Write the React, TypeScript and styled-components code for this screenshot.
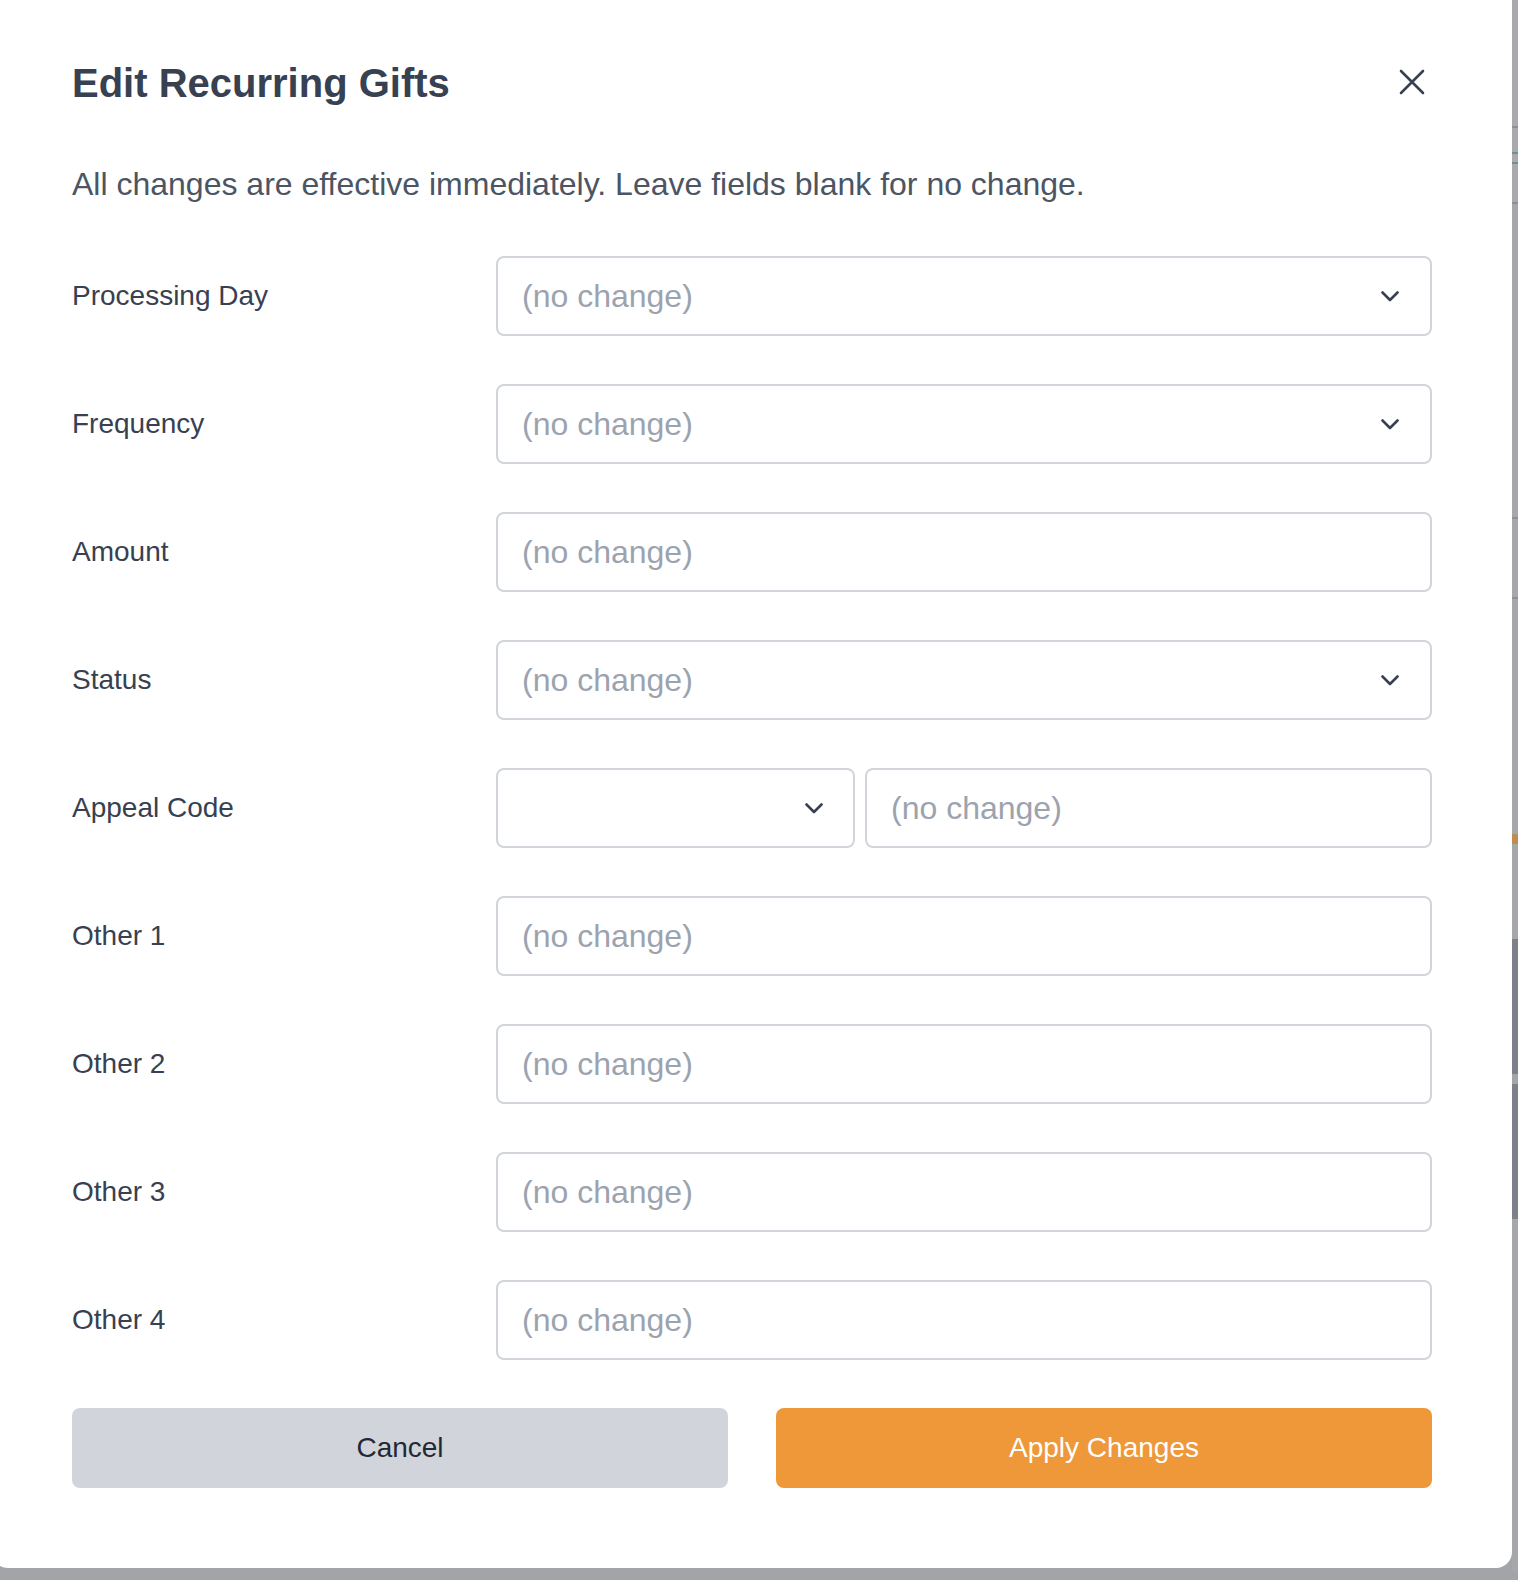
import React from 'react'
import styled, { createGlobalStyle } from 'styled-components'

const colors = {
  backdrop: '#a3a4a8',
  white: '#ffffff',
  heading: '#374151',
  text: '#4b5563',
  label: '#374151',
  border: '#d1d5db',
  placeholder: '#9ca3af',
  cancel: '#d1d5db',
  cancelText: '#1f2937',
  accent: '#ee9839',
}

const GlobalStyle = createGlobalStyle`
  html, body {
    margin: 0;
    padding: 0;
    background: ${colors.backdrop};
    overflow: hidden;
  }
  * {
    box-sizing: border-box;
  }
`

const Screen = styled.div`
  display: flex;
  align-items: flex-start;
  width: 1518px;
  height: 1580px;
  font-family: 'Liberation Sans', Arial, sans-serif;
`

const Modal = styled.div`
  flex: 0 0 1520px;
  margin-left: -8px;
  background: ${colors.white};
  border-radius: 0 0 16px 16px;
  padding: 59px 80px 80px;
`

const Header = styled.div`
  display: flex;
  align-items: center;
  justify-content: space-between;
`

const Title = styled.h2`
  margin: 0;
  font-size: 40px;
  line-height: 48px;
  font-weight: 700;
  color: ${colors.heading};
`

const CloseButton = styled.button`
  display: flex;
  align-items: center;
  justify-content: center;
  width: 40px;
  height: 40px;
  margin: -3px 0 0 0;
  padding: 0;
  border: none;
  background: none;
  color: ${colors.heading};
  cursor: pointer;
`

const Description = styled.p`
  margin: 53px 0 0;
  font-size: 32px;
  line-height: 48px;
  color: ${colors.text};
`

const Form = styled.div`
  display: grid;
  grid-template-columns: 424px 1fr;
  row-gap: 48px;
  align-items: center;
  margin-top: 48px;
`

const Label = styled.label`
  font-size: 28px;
  line-height: 36px;
  color: ${colors.label};
`

const fieldBase = `
  height: 80px;
  width: 100%;
  border: 2px solid ${colors.border};
  border-radius: 8px;
  background: ${colors.white};
  font-family: 'Liberation Sans', Arial, sans-serif;
  font-size: 32px;
`

const TextInput = styled.input`
  ${fieldBase}
  padding: 0 24px;
  color: ${colors.heading};
  outline: none;
  &::placeholder {
    color: ${colors.placeholder};
  }
`

const SelectBox = styled.div<{ $chevronRight: number }>`
  ${fieldBase}
  display: flex;
  align-items: center;
  justify-content: space-between;
  padding: 0 ${(p) => p.$chevronRight}px 0 24px;
  color: ${colors.placeholder};
  cursor: pointer;
`

const Split = styled.div`
  display: grid;
  grid-template-columns: 359px 1fr;
  column-gap: 10px;
`

const Actions = styled.div`
  display: grid;
  grid-template-columns: 1fr 1fr;
  column-gap: 48px;
  margin-top: 48px;
`

const ActionButton = styled.button<{ $primary?: boolean }>`
  height: 80px;
  border: none;
  border-radius: 8px;
  font-family: 'Liberation Sans', Arial, sans-serif;
  font-size: 28px;
  background: ${(p) => (p.$primary ? colors.accent : colors.cancel)};
  color: ${(p) => (p.$primary ? colors.white : colors.cancelText)};
  cursor: pointer;
`

const Strip = styled.div`
  flex: 1;
  display: flex;
  flex-direction: column;
  height: 1580px;
`

const StripBlock = styled.div<{ $h: number; $c: string }>`
  flex: 0 0 ${(p) => p.$h}px;
  background: ${(p) => p.$c};
`

const Chevron = () => (
  <svg width="18" height="11" viewBox="0 0 18 11" fill="none">
    <path d="M1.5 1.5 L9 9 L16.5 1.5" stroke={colors.heading} strokeWidth="2.6" strokeLinecap="round" strokeLinejoin="round" />
  </svg>
)

const CloseIcon = () => (
  <svg width="26" height="26" viewBox="0 0 26 26" fill="none">
    <path d="M2 2 L24 24 M24 2 L2 24" stroke="currentColor" strokeWidth="2.6" strokeLinecap="round" />
  </svg>
)

interface FieldProps {
  kind: 'select' | 'input'
}
const Field: React.FC<FieldProps> = ({ kind }) =>
  kind === 'select' ? (
    <SelectBox $chevronRight={31}>
      <span>(no change)</span>
      <Chevron />
    </SelectBox>
  ) : (
    <TextInput placeholder="(no change)" />
  )

const rows: { label: string; kind: 'select' | 'input' | 'appeal' }[] = [
  { label: 'Processing Day', kind: 'select' },
  { label: 'Frequency', kind: 'select' },
  { label: 'Amount', kind: 'input' },
  { label: 'Status', kind: 'select' },
  { label: 'Appeal Code', kind: 'appeal' },
  { label: 'Other 1', kind: 'input' },
  { label: 'Other 2', kind: 'input' },
  { label: 'Other 3', kind: 'input' },
  { label: 'Other 4', kind: 'input' },
]

const strip: [number, string][] = [
  [126, '#a9aaae'],
  [2, '#8e9096'],
  [24, '#a9aaae'],
  [2, '#6f8f92'],
  [8, '#a9aaae'],
  [2, '#6f8f92'],
  [38, '#a9aaae'],
  [2, '#8e9096'],
  [313, '#a6a7ab'],
  [2, '#8e9096'],
  [78, '#a6a7ab'],
  [2, '#8e9096'],
  [235, '#a6a7ab'],
  [10, '#c08a52'],
  [95, '#a6a7ab'],
  [135, '#7d818a'],
  [10, '#a4a5a9'],
  [135, '#7d818a'],
  [353, '#a6a7ab'],
  [12, colors.backdrop],
]

export default function App() {
  return (
    <>
      <GlobalStyle />
      <Screen>
        <Modal>
          <Header>
            <Title>Edit Recurring Gifts</Title>
            <CloseButton aria-label="Close">
              <CloseIcon />
            </CloseButton>
          </Header>
          <Description>All changes are effective immediately. Leave fields blank for no change.</Description>
          <Form>
            {rows.map((r) => (
              <React.Fragment key={r.label}>
                <Label>{r.label}</Label>
                {r.kind === 'appeal' ? (
                  <Split>
                    <SelectBox $chevronRight={30}>
                      <span />
                      <Chevron />
                    </SelectBox>
                    <TextInput placeholder="(no change)" />
                  </Split>
                ) : (
                  <Field kind={r.kind} />
                )}
              </React.Fragment>
            ))}
          </Form>
          <Actions>
            <ActionButton>Cancel</ActionButton>
            <ActionButton $primary>Apply Changes</ActionButton>
          </Actions>
        </Modal>
        <Strip>
          {strip.map(([h, c], i) => (
            <StripBlock key={i} $h={h} $c={c} />
          ))}
        </Strip>
      </Screen>
    </>
  )
}
